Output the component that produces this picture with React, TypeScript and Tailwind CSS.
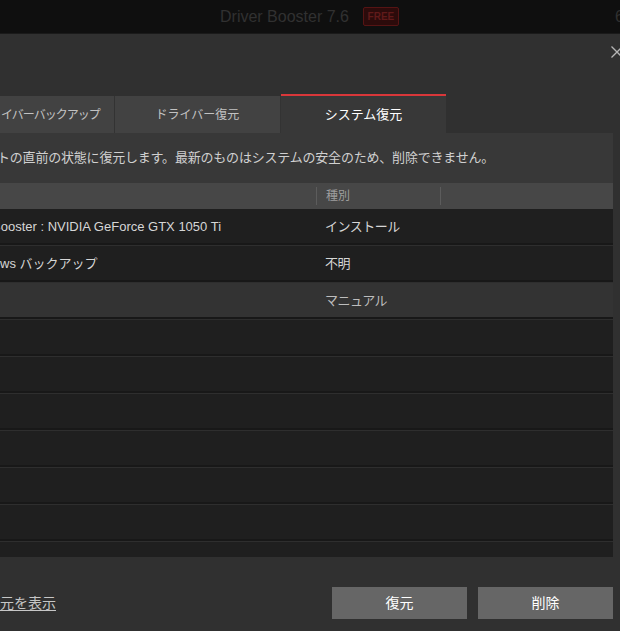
import React from 'react'

type Row = { name: string; kind: string; shift: string; active?: boolean }

const rows: Row[] = [
    { name: 'Booster : NVIDIA GeForce GTX 1050 Ti', kind: 'インストール', shift: '-ml-[8px]' },
    { name: 'ws バックアップ', kind: '不明', shift: 'ml-0' },
    { name: '', kind: 'マニュアル', shift: 'ml-0', active: true },
    { name: '', kind: '', shift: 'ml-0' },
    { name: '', kind: '', shift: 'ml-0' },
    { name: '', kind: '', shift: 'ml-0' },
    { name: '', kind: '', shift: 'ml-0' },
    { name: '', kind: '', shift: 'ml-0' },
    { name: '', kind: '', shift: 'ml-0' },
    { name: '', kind: '', shift: 'ml-0' },
]

function TitleBar() {
    return (
        <div className="flex h-[34px] shrink-0 items-center border-b border-[#1a1a1a] bg-[#0f0f0f] pl-[220px]">
            <span className="text-[16px] text-[#313131]">Driver Booster 7.6</span>
            <span className="ml-[14px] flex h-[19px] w-[36px] items-center justify-center rounded-[2px] border border-[#561414] bg-[#2c0b0b] text-[10px] font-bold text-[#601a1a]">
                FREE
            </span>
            <span className="ml-auto mr-[-4px] text-[16px] text-[#313131]">6</span>
        </div>
    )
}

function Tabs() {
    return (
        <div className="flex h-[39px] shrink-0 items-end text-[12px]">
            <div className="flex h-[37px] w-[115px] items-center overflow-hidden border-r border-[#333333] bg-[#424242] text-[#c2c2c2]">
                <span className="ml-[1px] whitespace-nowrap tracking-[-1px]">イバーバックアップ</span>
            </div>
            <div className="flex h-[37px] w-[166px] items-center justify-center border-r border-[#333333] bg-[#424242] text-[#c2c2c2]">
                ドライバー復元
            </div>
            <div className="flex h-[39px] w-[165px] items-center justify-center border-t-2 border-[#d9373a] bg-[#383838] text-[13px] text-white">
                システム復元
            </div>
        </div>
    )
}

function Table() {
    return (
        <div className="flex flex-1 flex-col overflow-hidden">
            <div className="flex h-[26px] shrink-0 items-center bg-[#474747] text-[12px] text-[#9e9e9e]">
                <div className="w-[316px]" />
                <div className="flex h-[18px] w-[125px] items-center border-l border-r border-[#5c5c5c] pl-[9px]">種別</div>
            </div>
            <div className="h-[348px] overflow-hidden">
                {rows.map((r, i) => (
                    <div
                        key={i}
                        className={
                            'flex h-[37px] items-center border-b border-[#2e2e2e] shadow-[inset_0_-2px_0_#181818] text-[13px] ' +
                            (r.active ? 'bg-[#333333] text-[#bdbdbd]' : 'bg-[#1f1f1f] text-[#d6d6d6]')
                        }
                    >
                        <div className="w-[325px] overflow-hidden whitespace-nowrap">
                            <span className={'block ' + r.shift}>{r.name}</span>
                        </div>
                        <div className="whitespace-nowrap tracking-[-0.5px]">{r.kind}</div>
                    </div>
                ))}
            </div>
        </div>
    )
}

export default function App() {
    return (
        <div className="flex h-[631px] w-[620px] flex-col overflow-hidden bg-[#303030] font-['Liberation_Sans','Noto_Sans_CJK_JP',sans-serif]">
            <TitleBar />
            <div className="flex h-[60px] shrink-0 justify-end pt-[11px]">
                <svg width="14" height="14" viewBox="0 0 14 14" className="mr-[-4px]">
                    <path d="M1.5 1.5 L12.5 12.5 M12.5 1.5 L1.5 12.5" stroke="#b5b5b5" strokeWidth="1.3" fill="none" />
                </svg>
            </div>
            <Tabs />
            <div className="flex h-[424px] w-[613px] shrink-0 flex-col bg-[#383838]">
                <div className="flex h-[50px] shrink-0 items-center overflow-hidden whitespace-nowrap text-[13px] text-[#d0d0d0]">
                    <span className="-ml-[3px] tracking-[-0.2px]">トの直前の状態に復元します。最新のものはシステムの安全のため、削除できません。</span>
                </div>
                <Table />
            </div>
            <div className="flex flex-1 items-end pb-[12px] pr-[7px]">
                <div className="flex h-[32px] flex-1 items-center">
                    <a className="-ml-[14px] text-[14px] text-[#c6c6c6] underline underline-offset-2">復元を表示</a>
                    <div className="ml-auto flex gap-[11px]">
                        <button className="h-[32px] w-[135px] bg-[#666666] text-[14px] text-white">復元</button>
                        <button className="h-[32px] w-[135px] bg-[#666666] text-[14px] text-white">削除</button>
                    </div>
                </div>
            </div>
        </div>
    )
}
